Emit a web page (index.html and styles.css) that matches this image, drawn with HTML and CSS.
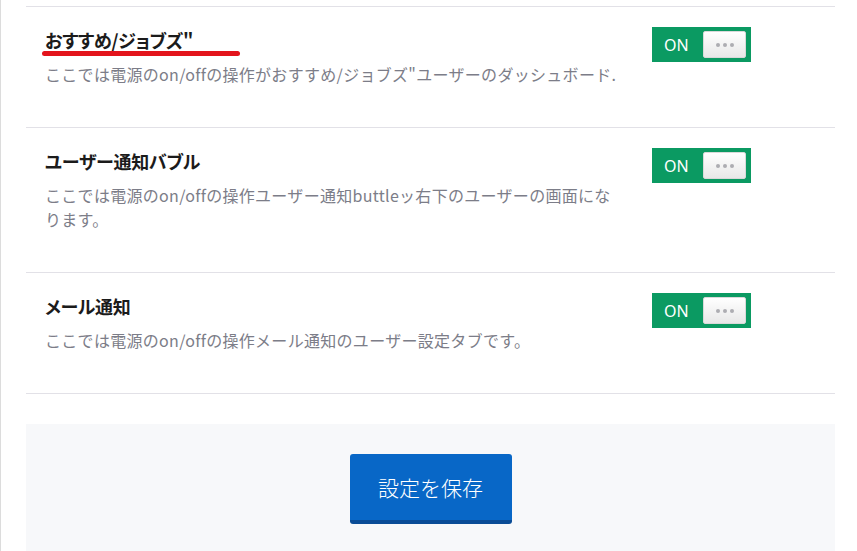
FILE: index.html
```html
<!DOCTYPE html>
<html lang="ja">
<head>
  <meta charset="UTF-8">
  <link rel="stylesheet" href="styles.css">
</head>
<body>
  <div class="page">
    <div class="settings">
      <div class="setting-row">
        <div class="setting-text">
          <div class="setting-title marked">おすすめ/ジョブズ"</div>
          <div class="setting-desc">ここでは電源のon/offの操作がおすすめ/ジョブズ"ユーザーのダッシュボード.</div>
        </div>
        <div class="toggle on">
          <span class="toggle-label">ON</span>
          <span class="toggle-knob"><i></i><i></i><i></i></span>
        </div>
      </div>

      <div class="setting-row">
        <div class="setting-text">
          <div class="setting-title">ユーザー通知バブル</div>
          <div class="setting-desc">ここでは電源のon/offの操作ユーザー通知buttleッ右下のユーザーの画面になります。</div>
        </div>
        <div class="toggle on">
          <span class="toggle-label">ON</span>
          <span class="toggle-knob"><i></i><i></i><i></i></span>
        </div>
      </div>

      <div class="setting-row">
        <div class="setting-text">
          <div class="setting-title">メール通知</div>
          <div class="setting-desc">ここでは電源のon/offの操作メール通知のユーザー設定タブです。</div>
        </div>
        <div class="toggle on">
          <span class="toggle-label">ON</span>
          <span class="toggle-knob"><i></i><i></i><i></i></span>
        </div>
      </div>
    </div>

    <div class="footer">
      <button class="save-btn">設定を保存</button>
    </div>
  </div>
</body>
</html>
```

FILE: styles.css
```css
html, body {
  margin: 0;
  height: 100%;
  background-color: #fff;
}

body {
  font-family: "Noto Sans CJK JP", "Noto Sans", sans-serif;
  color: #1b1b1b;
}

.page {
  box-sizing: border-box;
  min-height: 100%;
  border-left: 1px solid #dcdcdc;
  padding: 6px 22px 0 25px;
}

.settings {
  border-bottom: 1px solid #e2e1e7;
}

.setting-row {
  display: flex;
  align-items: flex-start;
  border-top: 1px solid #e2e1e7;
  padding: 20px 84px 41px 19px;
}

.setting-text {
  flex: 1;
}

.setting-title {
  display: inline-block;
  position: relative;
  font-size: 18px;
  font-weight: bold;
  line-height: 26px;
  font-feature-settings: "palt";
  letter-spacing: -0.3px;
  color: #1b1b1b;
}

.setting-title.marked::after {
  content: '';
  position: absolute;
  left: -3px;
  bottom: -3px;
  width: 198px;
  height: 5px;
  border-radius: 3px;
  background-color: #e3141c;
}

.setting-desc {
  margin-top: 9px;
  max-width: 572px;
  font-size: 16px;
  line-height: 24px;
  letter-spacing: 0.3px;
  color: #7c7d88;
}

.toggle {
  display: flex;
  align-items: center;
  justify-content: space-between;
  box-sizing: border-box;
  width: 99px;
  height: 35px;
  padding: 0 5px 0 12px;
  background-color: #0b9a62;
  flex-shrink: 0;
}

.toggle-label {
  font-family: "Noto Sans", sans-serif;
  font-size: 16px;
  color: #fff;
}

.toggle-knob {
  display: flex;
  align-items: center;
  justify-content: center;
  gap: 3px;
  box-sizing: border-box;
  width: 43px;
  height: 27px;
  border: 1px solid #d9d9d9;
  border-radius: 2px;
  background: linear-gradient(#ffffff, #e8e8e8);
}

.toggle-knob i {
  display: block;
  width: 4px;
  height: 4px;
  border-radius: 50%;
  background-color: #adadb2;
}

.footer {
  margin-top: 30px;
  padding: 30px 0 40px;
  background-color: #f7f8fa;
  text-align: center;
}

.save-btn {
  width: 162px;
  height: 70px;
  border: none;
  border-bottom: 4px solid #0a4c96;
  border-radius: 3px;
  background-color: #0867c7;
  color: #fff;
  font-family: "Noto Sans CJK JP", sans-serif;
  font-size: 21px;
  font-weight: 300;
  cursor: pointer;
}
```
